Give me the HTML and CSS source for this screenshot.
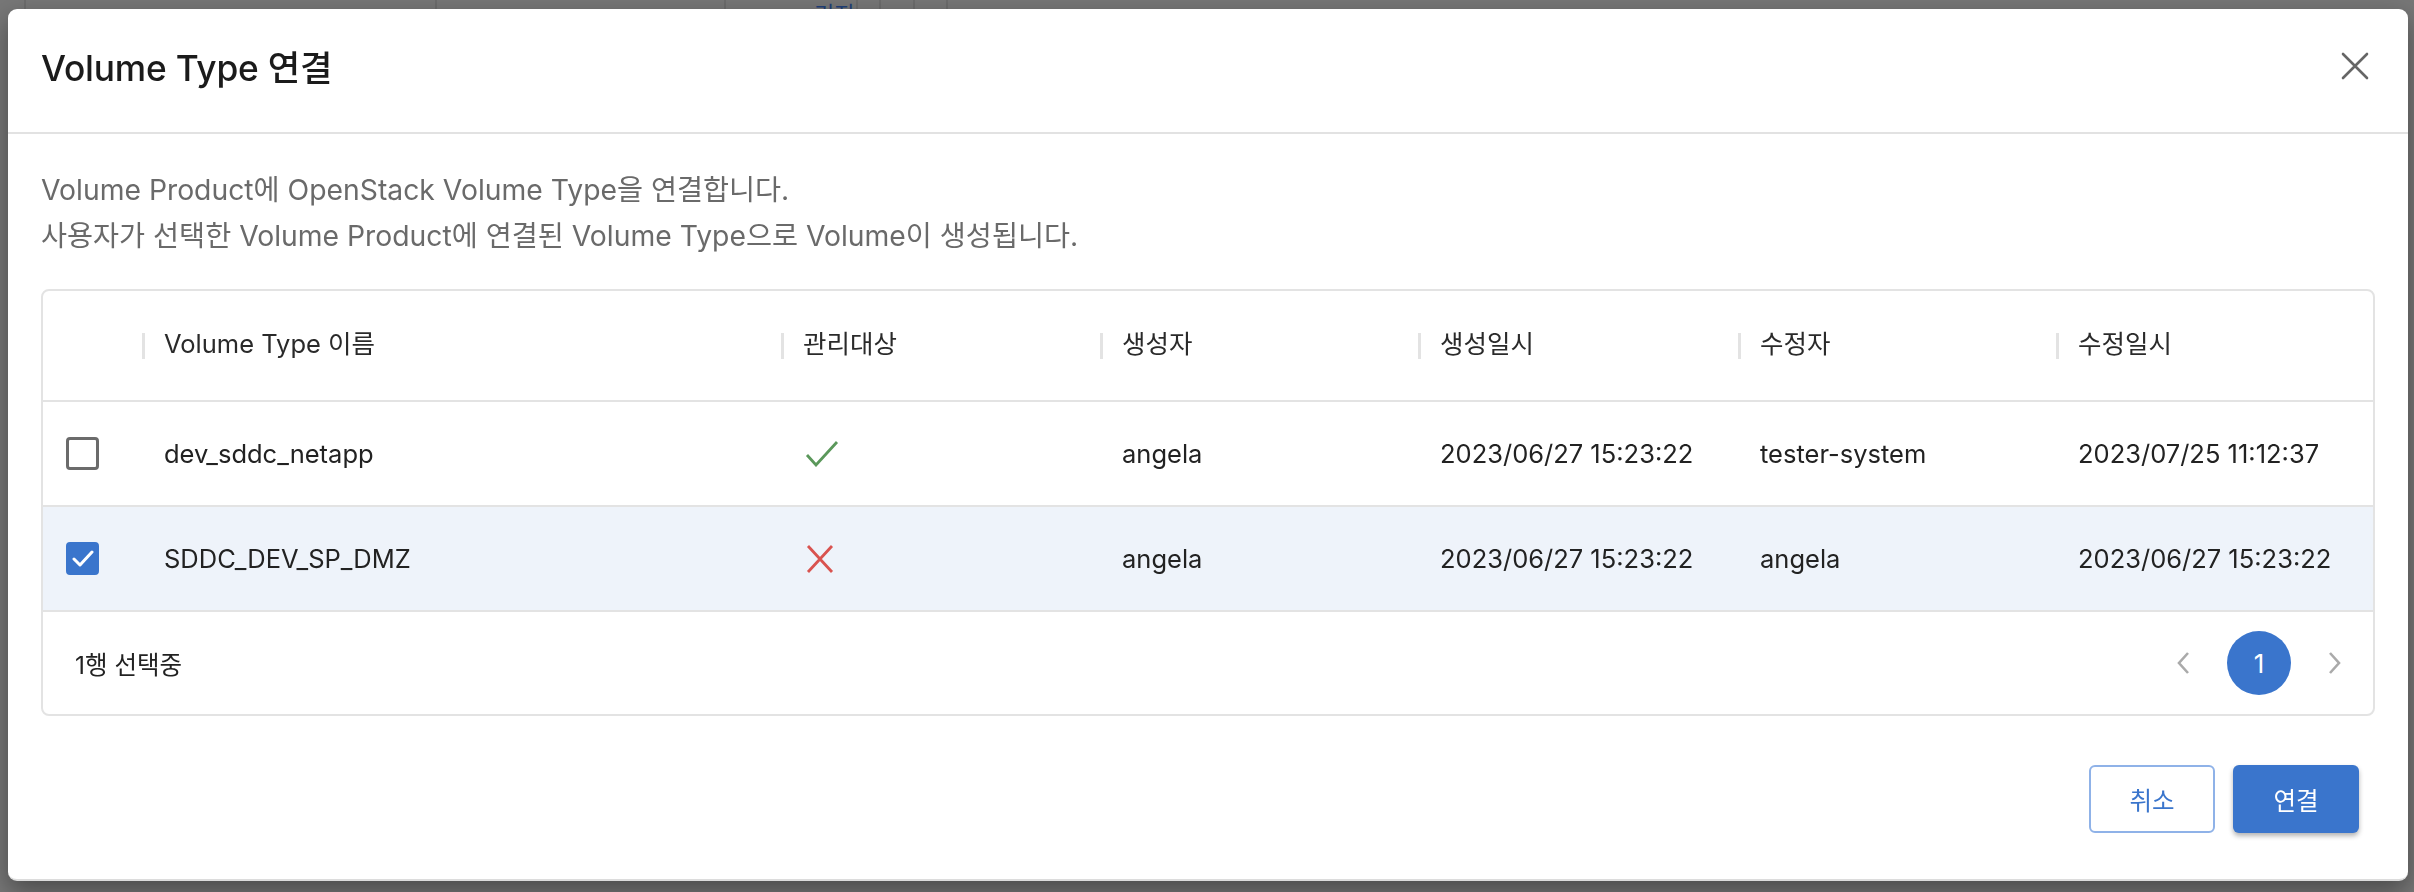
FILE: index.html
```html
<!DOCTYPE html>
<html lang="ko">
<head>
<meta charset="utf-8">
<title>Volume Type 연결</title>
<link rel="stylesheet" href="styles.css">
</head>
<body>
<div class="page">
  <div class="bg-row">
    <div class="bg-cell w1"></div>
    <div class="bg-cell w2"></div>
    <div class="bg-cell w3"></div>
    <div class="bg-cell w4"><span class="bg-text">기지</span></div>
    <div class="bg-cell w5"></div>
    <div class="bg-cell w6"></div>
    <div class="bg-cell w7"></div>
  </div>
</div>

<div class="backdrop">
  <div class="modal" role="dialog">
    <div class="modal-header">
      <h2 class="modal-title">Volume Type 연결</h2>
      <button class="close-btn" aria-label="닫기">
        <svg width="28" height="28" viewBox="0 0 28 28"><path d="M2 2 L26 26 M26 2 L2 26" stroke="#666" stroke-width="2.6" fill="none" stroke-linecap="round"/></svg>
      </button>
    </div>
    <div class="modal-body">
      <p class="desc">Volume Product에 OpenStack Volume Type을 연결합니다.<br>사용자가 선택한 Volume Product에 연결된 Volume Type으로 Volume이 생성됩니다.</p>
      <div class="grid-card">
        <div class="grid-row head">
          <div class="cell chk"></div>
          <div class="cell hcell"><span class="sep"></span>Volume Type 이름</div>
          <div class="cell hcell"><span class="sep"></span>관리대상</div>
          <div class="cell hcell"><span class="sep"></span>생성자</div>
          <div class="cell hcell"><span class="sep"></span>생성일시</div>
          <div class="cell hcell"><span class="sep"></span>수정자</div>
          <div class="cell hcell"><span class="sep"></span>수정일시</div>
        </div>
        <div class="grid-row data">
          <div class="cell chk"><span class="checkbox"></span></div>
          <div class="cell">dev_sddc_netapp</div>
          <div class="cell icon-cell">
            <svg width="34" height="26" viewBox="0 0 34 26"><path d="M2 14 L11 24 L32 1" stroke="#5b985b" stroke-width="2.8" fill="none"/></svg>
          </div>
          <div class="cell">angela</div>
          <div class="cell">2023/06/27 15:23:22</div>
          <div class="cell">tester-system</div>
          <div class="cell">2023/07/25 11:12:37</div>
        </div>
        <div class="grid-row data selected">
          <div class="cell chk"><span class="checkbox checked">
            <svg width="22" height="18" viewBox="0 0 22 18"><path d="M2 9 L8 15 L20 2" stroke="#fff" stroke-width="3" fill="none" stroke-linecap="round" stroke-linejoin="round"/></svg>
          </span></div>
          <div class="cell">SDDC_DEV_SP_DMZ</div>
          <div class="cell icon-cell">
            <svg width="30" height="28" viewBox="0 0 30 28"><path d="M3 1 L27 27 M27 1 L3 27" stroke="#d9534f" stroke-width="2.8" fill="none"/></svg>
          </div>
          <div class="cell">angela</div>
          <div class="cell">2023/06/27 15:23:22</div>
          <div class="cell">angela</div>
          <div class="cell">2023/06/27 15:23:22</div>
        </div>
        <div class="grid-footer">
          <span class="sel-count">1행 선택중</span>
          <div class="pager">
            <button class="pg-btn" aria-label="이전">
              <svg width="16" height="22" viewBox="0 0 16 22"><path d="M13 1 L4 11 L13 21" stroke="#aaa" stroke-width="2.6" fill="none"/></svg>
            </button>
            <button class="pg-btn current">1</button>
            <button class="pg-btn" aria-label="다음">
              <svg width="16" height="22" viewBox="0 0 16 22"><path d="M3 1 L12 11 L3 21" stroke="#aaa" stroke-width="2.6" fill="none"/></svg>
            </button>
          </div>
        </div>
      </div>
    </div>
    <div class="modal-footer">
      <button class="btn btn-outline">취소</button>
      <button class="btn btn-primary">연결</button>
    </div>
  </div>
</div>
</body>
</html>
```

FILE: styles.css
```css
* { box-sizing: border-box; }
html, body { margin: 0; padding: 0; }
body {
  background: #777777;
  font-family: Inter, "Noto Sans CJK KR", sans-serif;
  width: 2414px;
  height: 892px;
  overflow: hidden;
}
.page { height: 892px; }
.bg-row { display: flex; height: 40px; }
.bg-cell { border-right: 2px solid #6c6c6c; height: 40px; position: relative; }
.w1 { width: 26px; }
.w2 { width: 411px; }
.w3 { width: 289px; }
.w4 { width: 132px; }
.w5 { width: 23px; }
.w6 { width: 34px; }
.w7 { width: 33px; }
.bg-text {
  position: absolute; left: 88px; top: 0;
  color: #1f3f78; font-size: 22px; line-height: 24px;
  font-family: "Noto Sans CJK KR", sans-serif;
}

.backdrop {
  position: fixed; inset: 0;
  display: flex; align-items: flex-start; justify-content: flex-start;
  padding: 9px 0 0 8px;
}
.modal {
  width: 2400px; height: 872px;
  background: #fff;
  border-radius: 9px;
  border-bottom: 2px solid #dcdcdc;
  box-shadow: 0 10px 26px rgba(0,0,0,0.38);
  display: flex; flex-direction: column;
}
.modal-header {
  height: 125px;
  flex: none;
  border-bottom: 2px solid #e2e2e2;
  display: flex; align-items: center; justify-content: space-between;
  padding: 0 38px 10px 33px;
}
.modal-title {
  margin: 0;
  font-size: 35.3px; font-weight: 500; color: #1b1b1b;
  letter-spacing: -0.2px;
}
.close-btn { background: none; border: 0; padding: 0; width: 30px; height: 30px; display: flex; align-items: center; justify-content: center; }

.modal-body { padding: 33px 33px 0 33px; }
.desc {
  margin: 0;
  font-size: 28.3px; line-height: 46px; color: #6a6a6a;
}
.grid-card {
  margin-top: 30px;
  border: 2px solid #e3e3e3;
  border-radius: 8px;
  overflow: hidden;
}
.grid-row {
  display: grid;
  grid-template-columns: 99px 639px 319px 318px 320px 318px 1fr;
  border-bottom: 2px solid #e3e3e3;
}
.grid-row.head { height: 111px; }
.grid-row.data { height: 105px; }
.grid-row.selected { background: #eef3fa; }
.cell {
  display: flex; align-items: center;
  padding-left: 22px;
  font-size: 25.5px; color: #222;
}
.hcell { position: relative; color: #2a2a2a; padding-bottom: 8px; }
.sep {
  position: absolute; left: 0; top: 42px;
  width: 3px; height: 26px; background: #e3e3e3;
}
.chk { padding-left: 23px; }
.checkbox {
  width: 33px; height: 33px;
  border: 3px solid #6b6b6b; border-radius: 4px;
  display: flex; align-items: center; justify-content: center;
}
.checkbox.checked { background: #3a75cc; border-color: #3a75cc; }
.icon-cell { padding-left: 24px; }

.grid-footer {
  height: 102px;
  display: flex; align-items: center; justify-content: space-between;
  padding: 0 6px 0 32px;
}
.sel-count { font-size: 24.5px; color: #222; }
.pager { display: flex; gap: 12px; align-items: center; }
.pg-btn {
  width: 64px; height: 64px; border: 0; background: none; padding: 0;
  display: flex; align-items: center; justify-content: center;
  font-family: Inter, sans-serif; font-size: 26px; color: #fff;
  border-radius: 50%;
}
.pg-btn.current { background: #3a75cc; }

.modal-footer {
  display: flex; justify-content: flex-end; gap: 18px;
  padding: 49px 49px 0 0;
}
.btn {
  width: 126px; height: 68px;
  border-radius: 6px;
  font-family: Inter, "Noto Sans CJK KR", sans-serif;
  font-size: 24.5px;
}
.btn-outline { background: #fff; border: 2px solid #8fb2e8; color: #3a75cc; }
.btn-primary { background: #3a75cc; border: 0; color: #fff; box-shadow: 0 3px 5px rgba(0,0,0,0.3); }
```
